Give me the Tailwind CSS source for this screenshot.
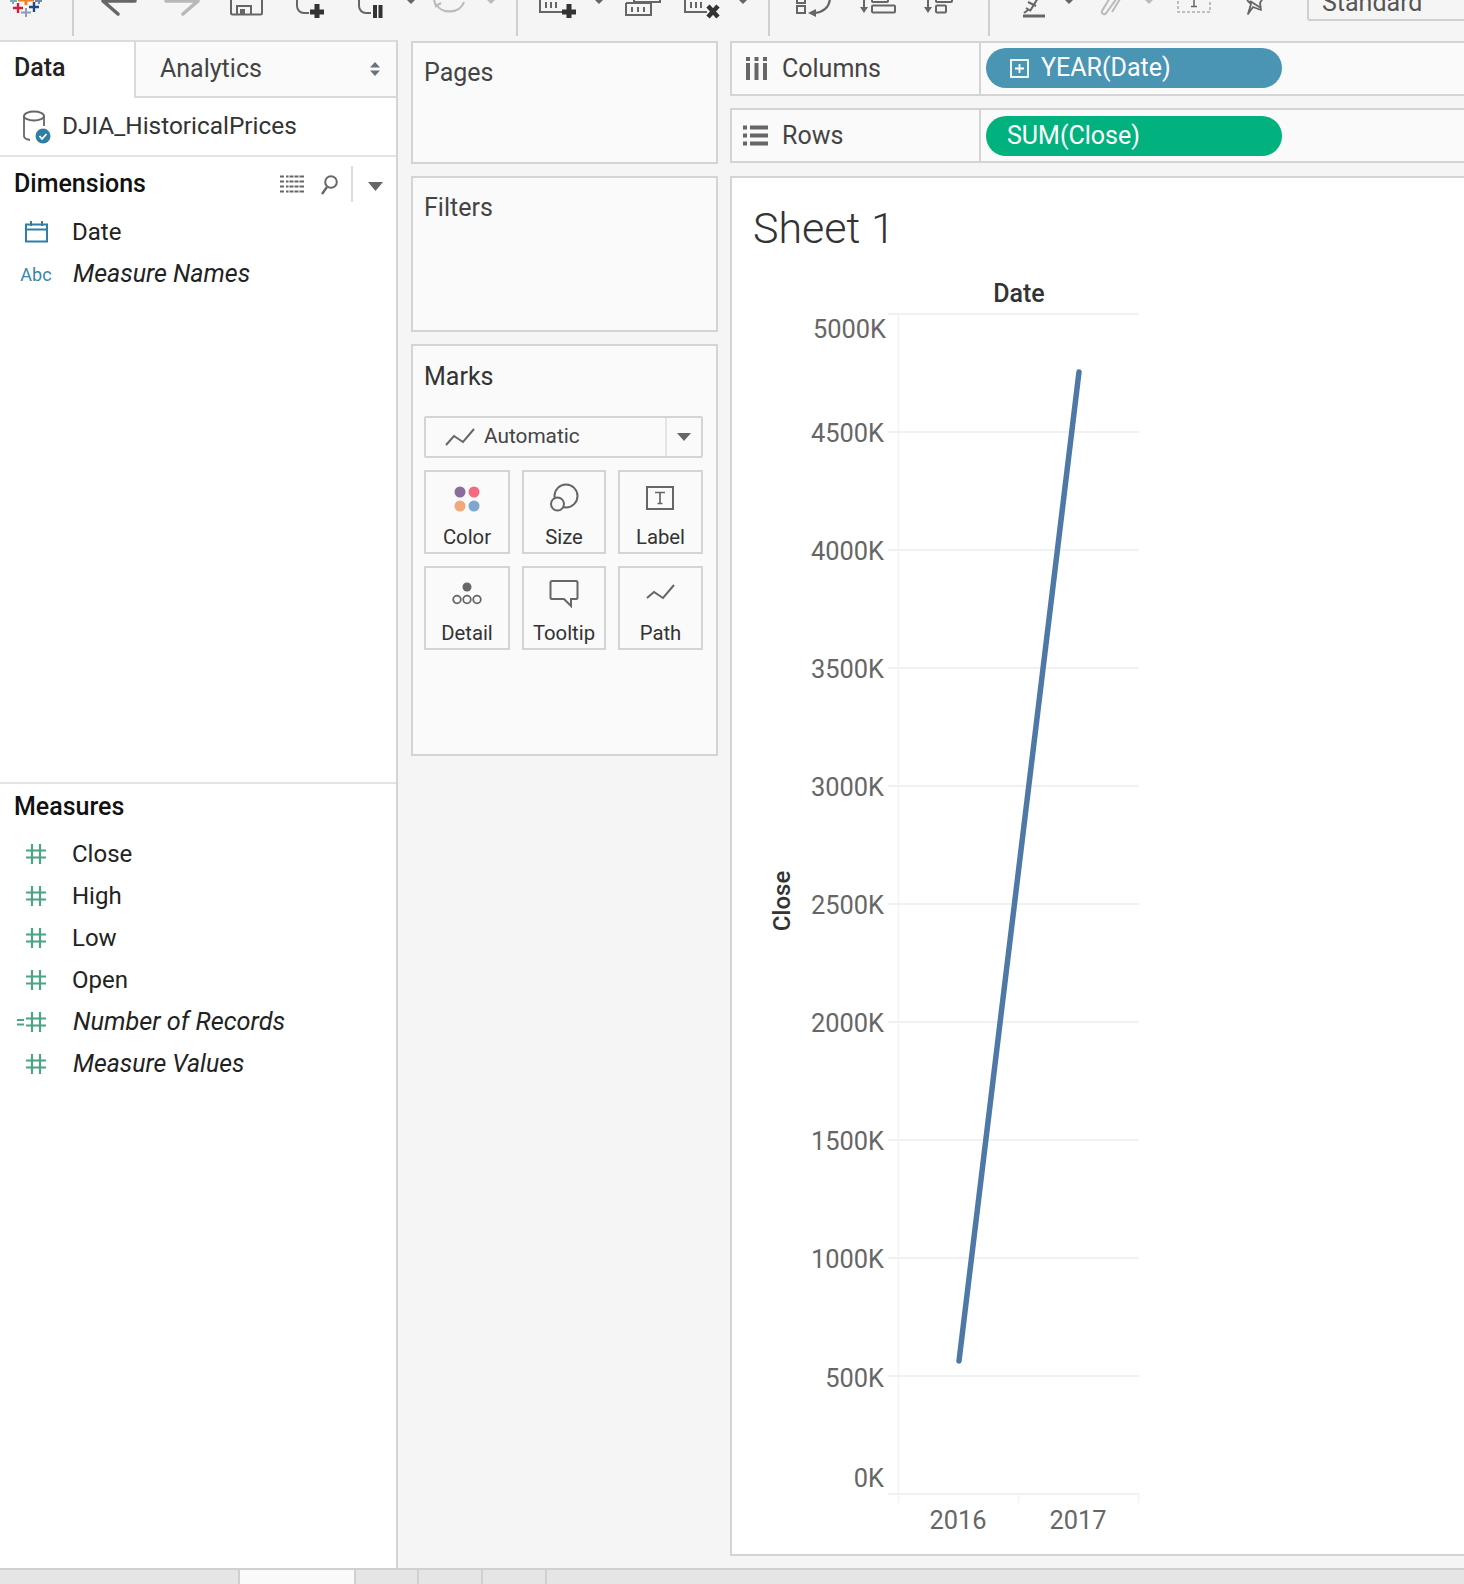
<!DOCTYPE html>
<html lang="en">
<head>
<meta charset="UTF-8">
<title>Tableau - Sheet 1</title>
<script src="https://cdn.jsdelivr.net/npm/@tailwindcss/browser@4"></script>
</head>
<body class="font-['Roboto',sans-serif] bg-[#f5f5f5] text-[#333]">

<!-- shared icons -->
<svg class="hidden">
  <symbol id="hash" viewBox="0 0 22 22">
    <path d="M7 1v20M15 1v20M1 7.5h20M1 14.5h20" fill="none" stroke="#4ba582" stroke-width="2.2"/>
  </symbol>
</svg>

<div class="w-[1464px] h-[1584px] flex flex-col overflow-hidden">

  <!-- toolbar: icons are cut off by the top of the window -->
  <div class="h-[40px] relative shrink-0 overflow-hidden">
    <svg width="1464" height="40" fill="none">
      <!-- logo -->
      <g stroke-width="2.4">
        <path d="M13 8h10M18 3v10" stroke="#d2203c"/>
        <path d="M29 7h10M34 2v10" stroke="#1f4a87"/>
        <path d="M21 12.500h10M26 8v9" stroke="#8b9dba" stroke-width="2"/>
        <path d="M18 0h16M26 -6v11" stroke="#ef7f25" stroke-width="3"/>
        <path d="M10 1h7M13 -3v7" stroke="#7fa9bd" stroke-width="2"/>
        <path d="M35 1h7M39 -3v7" stroke="#6f87ac" stroke-width="2"/>
      </g>
      <!-- separators -->
      <path d="M73 0v36M517 0v36M769 0v36M989 0v36" stroke="#cfcfcf" stroke-width="2"/>
      <!-- back / forward -->
      <path d="M135 1H103l15 13" stroke="#666" stroke-width="3.500" stroke-linecap="round" stroke-linejoin="round"/>
      <path d="M166 1h32l-15 13" stroke="#b8b8b8" stroke-width="3.500" stroke-linecap="round" stroke-linejoin="round"/>
      <!-- save -->
      <path d="M231 -4v17a1.500 1.500 0 0 0 1.500 1.500h28a1.500 1.500 0 0 0 1.500 -1.500v-17" stroke="#666" stroke-width="2"/>
      <path d="M237 14V6h14v8" stroke="#666" stroke-width="2"/>
      <rect x="240" y="9" width="5" height="5" fill="#666"/>
      <!-- new sheet -->
      <path d="M297 -4v10a7 7 0 0 0 7 7h5" stroke="#666" stroke-width="2"/>
      <path d="M310 12h14M317 4v14" stroke="#333" stroke-width="5"/>
      <!-- pause updates -->
      <path d="M359 -4v10a7 7 0 0 0 7 7h5" stroke="#666" stroke-width="2"/>
      <path d="M375 5v13M380.500 5v13" stroke="#333" stroke-width="4"/>
      <path d="M407 0h8l-4 4z" fill="#666"/>
      <!-- undo -->
      <path d="M436 4a15 13 0 0 0 28 -2M434 0l2 6 5 -3" stroke="#bbb" stroke-width="2.200"/>
      <path d="M487 0h8l-4 4z" fill="#bbb"/>
      <!-- add data -->
      <path d="M540 -4v16h24" stroke="#666" stroke-width="2"/>
      <path d="M546 2v6M551 2v6M556 2v6" stroke="#666" stroke-width="2"/>
      <path d="M562 12h14M569 4v14" stroke="#333" stroke-width="5"/>
      <path d="M595 0h8l-4 4z" fill="#666"/>
      <!-- duplicate -->
      <path d="M626 3v12h25V3h-25" stroke="#666" stroke-width="2"/>
      <path d="M634 -3v5h26v-5" stroke="#666" stroke-width="2"/>
      <path d="M632 7v5M638 7v5M644 7v5" stroke="#666" stroke-width="2"/>
      <!-- clear -->
      <path d="M685 -4v16h22" stroke="#666" stroke-width="2"/>
      <path d="M691 2v6M696 2v6M701 2v6" stroke="#666" stroke-width="2"/>
      <path d="M708 6l10 11M718 6l-10 11" stroke="#333" stroke-width="4.500"/>
      <path d="M739 0h8l-4 4z" fill="#666"/>
      <!-- swap -->
      <rect x="797" y="-5" width="8" height="8" stroke="#666" stroke-width="2"/>
      <rect x="797" y="6" width="8" height="7" stroke="#666" stroke-width="2"/>
      <path d="M830 -1c-1 9 -8 13 -15 14" stroke="#666" stroke-width="2.200"/>
      <path d="M808 13l8 -4v8z" fill="#666"/>
      <!-- sort asc -->
      <path d="M864 -2v10" stroke="#666" stroke-width="2"/>
      <path d="M860 7h8l-4 6z" fill="#666"/>
      <rect x="872" y="5.500" width="23" height="7" rx="1" stroke="#666" stroke-width="2"/>
      <rect x="872" y="-5" width="16" height="7" rx="1" stroke="#666" stroke-width="2"/>
      <!-- sort desc -->
      <path d="M928 -2v10" stroke="#666" stroke-width="2"/>
      <path d="M924 7h8l-4 6z" fill="#666"/>
      <rect x="936" y="5.500" width="10" height="7" rx="1" stroke="#666" stroke-width="2"/>
      <rect x="936" y="-5" width="16" height="7" rx="1" stroke="#666" stroke-width="2"/>
      <!-- highlight -->
      <path d="M1023 16h22" stroke="#666" stroke-width="3"/>
      <path d="M1024 13l4 -3M1030 11l8 -13M1036 6l-8 -4M1026 8l5 3" stroke="#666" stroke-width="2"/>
      <path d="M1065 0h8l-4 4z" fill="#666"/>
      <!-- attach -->
      <path d="M1117 -2l-10 14c-2 4 -6 2 -5 -1l9 -15M1120 -1l-8 13" stroke="#bbb" stroke-width="2"/>
      <path d="M1145 0h8l-4 4z" fill="#bbb"/>
      <!-- labels -->
      <path d="M1178 -4v16h32v-16" stroke="#aaa" stroke-width="1.500" stroke-dasharray="3 2"/>
      <path d="M1194 -2v8M1191 6.500h6" stroke="#666" stroke-width="1.500"/>
      <!-- pin -->
      <path d="M1247 0l4 4 -3 10 5 -7 8 3 -1 -7 3 -5M1250 1l11 7" stroke="#666" stroke-width="1.800" stroke-linejoin="round"/>
    </svg>
    <!-- fit dropdown -->
    <div class="absolute left-[1307px] top-[-20px] w-[170px] h-[41px] border-2 border-[#cfcfcf] rounded-[3px] pl-[13px] text-[25px] leading-[42px] text-[#555]">Standard</div>
  </div>

  <div class="flex-1 flex min-h-0">

    <!-- data pane -->
    <aside class="w-[398px] shrink-0 flex flex-col bg-white border-r-2 border-[#d4d4d4] border-t-2 border-t-[#dcdcdc]">
      <div class="flex h-[56px] shrink-0">
        <div class="w-[134px] pl-[14px] pt-[7px] text-[25px] font-medium text-[#222]">Data</div>
        <div class="flex-1 flex items-center justify-between bg-[#fafafa] border-l-2 border-b-2 border-[#d9d9d9] pl-[24px] pr-[15px] pb-[1px] text-[25px] text-[#444]">
          <span>Analytics</span>
          <svg width="12" height="16"><path d="M1 6.500L6 1l5 5.500zM1 9.500L6 15l5 -5.500z" fill="#6a7280"/></svg>
        </div>
      </div>
      <div class="h-[59px] shrink-0 flex items-center pl-[22px] border-b-2 border-[#e4e4e4]">
        <svg width="30" height="34" viewBox="0 0 30 34" fill="none">
          <ellipse cx="12" cy="6" rx="10" ry="4.500" stroke="#666" stroke-width="1.800"/>
          <path d="M2 6v20c0 2.500 3 3.500 6 4M22 6v10" stroke="#666" stroke-width="1.800"/>
          <circle cx="21" cy="26" r="7.500" fill="#2f7ea6"/>
          <path d="M17.500 26l2.500 3 4.500 -5" stroke="#fff" stroke-width="1.800"/>
        </svg>
        <span class="ml-[10px] text-[24.400px] text-[#333]">DJIA_HistoricalPrices</span>
      </div>

      <div class="h-[627px] shrink-0 border-b-2 border-[#e4e4e4]">
        <div class="h-[46px] mt-[4px] flex items-center relative">
          <h2 class="pl-[14px] text-[25px] font-medium text-[#111]">Dimensions</h2>
          <svg class="absolute left-[280px] top-[14px]" width="25" height="19" fill="none">
            <path d="M0 1.500h4M6 1.500h18M0 6.500h4M6 6.500h18M0 11.500h4M6 11.500h18M0 16.500h4M6 16.500h18" stroke="#666" stroke-width="2"/>
            <path d="M9 0v19M14 0v19M19 0v19" stroke="#fff" stroke-width="1"/>
          </svg>
          <svg class="absolute left-[320px] top-[13px]" width="20" height="22" fill="none">
            <circle cx="11" cy="8" r="5.800" stroke="#666" stroke-width="2"/>
            <path d="M7 13l-5 7" stroke="#666" stroke-width="2.400"/>
          </svg>
          <div class="absolute left-[351px] top-[5px] w-[2px] h-[36px] bg-[#dcdcdc]"></div>
          <svg class="absolute left-[368px] top-[21px]" width="15" height="9"><path d="M0 0h15L7.500 9z" fill="#666"/></svg>
        </div>
        <ul class="mt-[4px] text-[24px] text-[#222]">
          <li class="h-[42px] flex items-center">
            <span class="w-[72px] flex justify-center">
              <svg width="23" height="22" fill="none">
                <rect x="1" y="3.500" width="21" height="17" stroke="#2f7ea6" stroke-width="2"/>
                <path d="M1 8.500h21M6 0v5M17 0v5" stroke="#2f7ea6" stroke-width="2"/>
              </svg>
            </span>
            <span>Date</span>
          </li>
          <li class="h-[42px] flex items-center">
            <span class="w-[73px] pr-[1px] text-center text-[18px] text-[#3a85ad]">Abc</span>
            <span class="italic text-[25px]">Measure Names</span>
          </li>
        </ul>
      </div>

      <h2 class="pl-[14px] mt-[7px] h-[40px] leading-[32px] text-[25px] font-medium text-[#111]">Measures</h2>
      <ul class="mt-[2px] text-[24px] text-[#222]">
        <li class="h-[42px] flex items-center"><span class="w-[72px] flex justify-center"><svg width="22" height="22"><use href="#hash"/></svg></span><span>Close</span></li>
        <li class="h-[42px] flex items-center"><span class="w-[72px] flex justify-center"><svg width="22" height="22"><use href="#hash"/></svg></span><span>High</span></li>
        <li class="h-[42px] flex items-center"><span class="w-[72px] flex justify-center"><svg width="22" height="22"><use href="#hash"/></svg></span><span>Low</span></li>
        <li class="h-[42px] flex items-center"><span class="w-[72px] flex justify-center"><svg width="22" height="22"><use href="#hash"/></svg></span><span>Open</span></li>
        <li class="h-[42px] flex items-center relative">
          <svg class="absolute left-[17px] top-[18px]" width="9" height="7"><path d="M0 1h7M0 5.500h7" stroke="#4ba582" stroke-width="1.800"/></svg>
          <span class="w-[73px] pr-[1px] flex justify-center"><svg width="22" height="22"><use href="#hash"/></svg></span><span class="italic text-[25.300px]">Number of Records</span>
        </li>
        <li class="h-[42px] flex items-center"><span class="w-[73px] pr-[1px] flex justify-center"><svg width="22" height="22"><use href="#hash"/></svg></span><span class="italic text-[24.800px]">Measure Values</span></li>
      </ul>
    </aside>

    <!-- cards column -->
    <div class="w-[332px] shrink-0 pl-[13px] pr-[12px] pt-[1px] flex flex-col gap-[12px]">
      <section class="h-[123px] bg-[#fafafa] border-2 border-[#d4d4d4] pl-[11px] pt-[11px] text-[25px] text-[#444]">Pages</section>
      <section class="h-[156px] bg-[#fafafa] border-2 border-[#d4d4d4] pl-[11px] pt-[11px] text-[25px] text-[#444]">Filters</section>
      <section class="h-[412px] bg-[#fafafa] border-2 border-[#d4d4d4] pl-[11px] pr-[13px]">
        <h2 class="pt-[12px] h-[70px] text-[25px] text-[#333]">Marks</h2>
        <div class="h-[42px] flex items-center border-2 border-[#d4d4d4] rounded-[2px] bg-[#fafafa]">
          <svg class="ml-[19px]" width="30" height="18" fill="none"><path d="M1 17l8 -9 9 6 11 -13" stroke="#666" stroke-width="2"/></svg>
          <span class="ml-[9px] flex-1 text-[20.800px] text-[#444]">Automatic</span>
          <div class="w-[36px] h-full border-l-2 border-[#e4e4e4] flex items-center justify-center">
            <svg width="14" height="8"><path d="M0 0h14L7 8z" fill="#666"/></svg>
          </div>
        </div>
        <div class="mt-[12px] grid grid-cols-[86px_84px_85px] justify-between gap-y-[12px] text-[20.300px] text-[#333]">
          <div class="h-[84px] border-2 border-[#d4d4d4] flex flex-col items-center pt-[13px]">
            <svg width="28" height="28"><circle cx="7" cy="7" r="5.500" fill="#8a6d9b"/><circle cx="21" cy="7" r="5.500" fill="#f66a7f"/><circle cx="7" cy="21" r="5.500" fill="#f2a878"/><circle cx="21" cy="21" r="5.500" fill="#7fa6d0"/></svg>
            <span class="mt-[9px]">Color</span>
          </div>
          <div class="h-[84px] border-2 border-[#d4d4d4] flex flex-col items-center pt-[11px]">
            <svg width="30" height="30" fill="none"><circle cx="17" cy="13" r="11.500" stroke="#666" stroke-width="2"/><circle cx="8.500" cy="21" r="6.500" fill="#fafafa" stroke="#666" stroke-width="2"/></svg>
            <span class="mt-[9px]">Size</span>
          </div>
          <div class="h-[84px] border-2 border-[#d4d4d4] flex flex-col items-center pt-[14px]">
            <svg width="30" height="26" fill="none"><rect x="1" y="1" width="26" height="22" stroke="#666" stroke-width="2"/><path d="M9 6.500h10M14 6.500v11M11.500 17.500h5" stroke="#666" stroke-width="1.700"/></svg>
            <span class="mt-[10px]">Label</span>
          </div>
          <div class="h-[84px] border-2 border-[#d4d4d4] flex flex-col items-center pt-[13px]">
            <svg width="32" height="26" fill="none"><circle cx="16" cy="6" r="4.500" fill="#666"/><circle cx="6" cy="18.500" r="3.800" stroke="#666" stroke-width="1.800"/><circle cx="16" cy="18.500" r="3.800" stroke="#666" stroke-width="1.800"/><circle cx="26" cy="18.500" r="3.800" stroke="#666" stroke-width="1.800"/></svg>
            <span class="mt-[11px]">Detail</span>
          </div>
          <div class="h-[84px] border-2 border-[#d4d4d4] flex flex-col items-center pt-[12px]">
            <svg width="30" height="28" fill="none"><path d="M3 1h24a1.500 1.500 0 0 1 1.500 1.500v15a1.500 1.500 0 0 1 -1.500 1.500h-5v7l-7 -7H3a1.500 1.500 0 0 1 -1.500 -1.500v-15A1.500 1.500 0 0 1 3 1z" stroke="#666" stroke-width="2"/></svg>
            <span class="mt-[10px]">Tooltip</span>
          </div>
          <div class="h-[84px] border-2 border-[#d4d4d4] flex flex-col items-center pt-[14px]">
            <svg width="30" height="26" fill="none"><path d="M1 16l7 -6 9 6 11 -13" stroke="#666" stroke-width="2"/></svg>
            <span class="mt-[10px]">Path</span>
          </div>
        </div>
      </section>
    </div>

    <!-- shelves and view -->
    <div class="flex-1 min-w-0 flex flex-col">
      <div class="h-[55px] mt-[1px] shrink-0 flex bg-[#fafafa] border-y-2 border-l-2 border-[#d4d4d4]">
        <div class="w-[249px] flex items-center text-[25px] text-[#444] border-r-2 border-[#d4d4d4]">
          <svg class="ml-[13px]" width="23" height="25"><rect x="1" y="1" width="4" height="4" fill="#666"/><rect x="9.500" y="1" width="4" height="4" fill="#666"/><rect x="18" y="1" width="4" height="4" fill="#666"/><rect x="1" y="7" width="4" height="17" fill="#666"/><rect x="9.500" y="7" width="4" height="17" fill="#666"/><rect x="18" y="7" width="4" height="17" fill="#666"/></svg>
          <span class="ml-[14px]">Columns</span>
        </div>
        <div class="ml-[5px] mt-[5px] w-[296px] h-[40px] rounded-[20px] bg-[#4a95b3] flex items-center text-white text-[25px]">
          <svg class="ml-[24px] mr-[12px]" width="19" height="19" fill="none"><rect x="1" y="1" width="17" height="17" stroke="#fff" stroke-width="1.800"/><path d="M9.500 5v9M5 9.500h9" stroke="#fff" stroke-width="1.800"/></svg>
          <span>YEAR(Date)</span>
        </div>
      </div>
      <div class="h-[55px] mt-[12px] shrink-0 flex bg-[#fafafa] border-y-2 border-l-2 border-[#d4d4d4]">
        <div class="w-[249px] flex items-center text-[25px] text-[#444] border-r-2 border-[#d4d4d4]">
          <svg class="ml-[11px]" width="25" height="21"><path d="M0 2.500h4M7 2.500h18M0 10.500h4M7 10.500h18M0 18.500h4M7 18.500h18" stroke="#666" stroke-width="4"/></svg>
          <span class="ml-[14px] pt-[1px]">Rows</span>
        </div>
        <div class="ml-[5px] mt-[6px] w-[296px] h-[40px] rounded-[20px] bg-[#02b27e] flex items-center pl-[21px] text-white text-[25px]">SUM(Close)</div>
      </div>

      <!-- view -->
      <div class="h-[1380px] mt-[13px] shrink-0 bg-white border-y-2 border-l-2 border-[#d4d4d4] relative">
        <h1 class="absolute left-[21px] top-[25px] text-[43px] font-light leading-[50px] text-[#333]">Sheet 1</h1>
        <!-- chart, origin is the page position of the view's corner -->
        <svg class="absolute left-0 top-0" width="732" height="1376" viewBox="732 178 732 1376" fill="none">
          <path d="M888 314h251M888 432h251M888 550h251M888 668h251M888 786h251M888 904h251M888 1022h251M888 1140h251M888 1258h251M888 1376h251M888 1494h251" stroke="#f1f1f1" stroke-width="2"/>
          <path d="M898.500 314v1189M1018.500 1494v9M1138.500 1494v9" stroke="#f1f1f1" stroke-width="1.500"/>
          <path d="M959 1361L1079 372" stroke="#4e79a7" stroke-width="5.500" stroke-linecap="round"/>
          <g fill="#666" font-size="25.400" text-anchor="end">
            <text x="886" y="338">5000K</text>
            <text x="884" y="442">4500K</text>
            <text x="884" y="560">4000K</text>
            <text x="884" y="678">3500K</text>
            <text x="884" y="796">3000K</text>
            <text x="884" y="914">2500K</text>
            <text x="884" y="1032">2000K</text>
            <text x="884" y="1150">1500K</text>
            <text x="884" y="1268">1000K</text>
            <text x="884" y="1387">500K</text>
            <text x="884" y="1487">0K</text>
          </g>
          <g fill="#666" font-size="25.400" text-anchor="middle">
            <text x="958" y="1529">2016</text>
            <text x="1078" y="1529">2017</text>
          </g>
          <text x="1019" y="302" fill="#333" font-size="25" font-weight="500" text-anchor="middle">Date</text>
          <text x="0" y="0" fill="#333" font-size="24" font-weight="500" text-anchor="middle" transform="translate(790 901) rotate(-90)">Close</text>
        </svg>
      </div>
    </div>
  </div>

  <!-- sheet tabs -->
  <div class="h-[16px] shrink-0 flex bg-[#e5e5e5] border-t-2 border-[#d0d0d0]">
    <div class="w-[240px] border-r-2 border-[#d0d0d0]"></div>
    <div class="w-[116px] bg-[#fafafa] border-r-2 border-[#d0d0d0]"></div>
    <div class="w-[63px] border-r-2 border-[#d0d0d0]"></div>
    <div class="w-[64px] border-r-2 border-[#d0d0d0]"></div>
    <div class="w-[64px] border-r-2 border-[#d0d0d0]"></div>
  </div>
</div>
</body>
</html>
